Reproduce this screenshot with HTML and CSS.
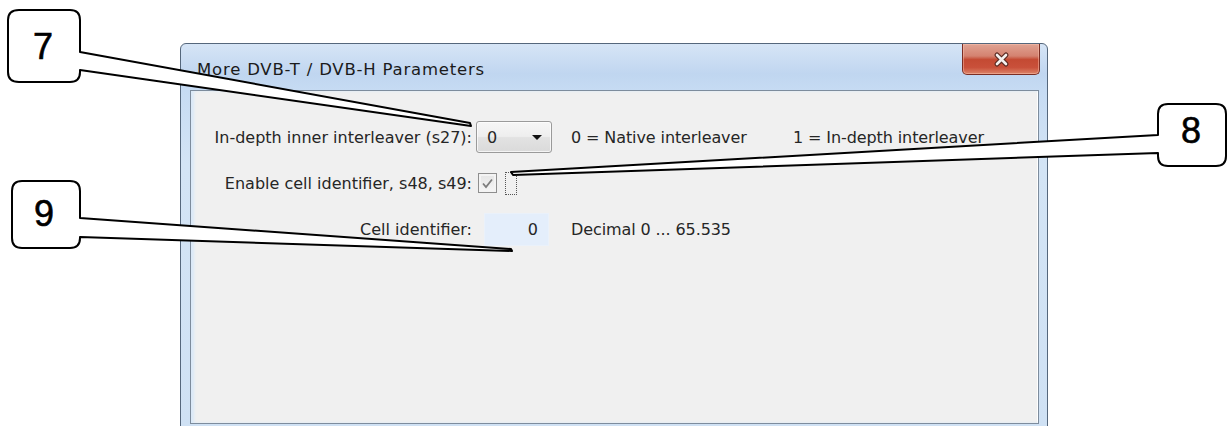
FILE: index.html
```html
<!DOCTYPE html>
<html lang="en">
<head>
<meta charset="utf-8">
<title>More DVB-T / DVB-H Parameters</title>
<link rel="stylesheet" href="styles.css">
</head>
<body>
<div class="stage">
  <div class="window">
    <div class="titlebar">
      <span class="title">More DVB-T / DVB-H Parameters</span>
      <div class="close" aria-label="Close">
        <svg width="17" height="17" viewBox="0 0 17 17">
          <path d="M4 4 L13 13 M13 4 L4 13" stroke="#5a2a22" stroke-width="5" stroke-linecap="round"/>
          <path d="M4 4 L13 13 M13 4 L4 13" stroke="#f4f0ee" stroke-width="2.6" stroke-linecap="round"/>
        </svg>
      </div>
    </div>
    <div class="client">
      <div class="form">
        <label class="lbl">In-depth inner interleaver (s27):</label>
        <div class="ctl">
          <div class="combo"><span>0</span><i class="arrow"></i></div>
        </div>
        <span class="desc">0 = Native interleaver</span>
        <span class="desc">1 = In-depth interleaver</span>

        <label class="lbl">Enable cell identifier, s48, s49:</label>
        <div class="ctl">
          <div class="check">
            <svg width="13" height="13" viewBox="0 0 13 13"><path d="M2 6.5 L5 10 L11 2.5" fill="none" stroke="#7d7d7d" stroke-width="1.8"/></svg>
          </div>
          <span class="focus"></span>
        </div>
        <span></span>
        <span></span>

        <label class="lbl">Cell identifier:</label>
        <div class="ctl">
          <div class="field">0</div>
        </div>
        <span class="desc">Decimal 0 ... 65.535</span>
        <span></span>
      </div>
    </div>
  </div>

  <svg class="callouts" width="1230" height="426" viewBox="0 0 1230 426">
    <g fill="#ffffff" stroke="#000000" stroke-width="2" stroke-linejoin="round">
      <path d="M19 10 H70 Q80 10 80 20 V52 L470 123 L471 126 L80 70 V72 Q80 82 70 82 H19 Q8 82 8 72 V20 Q8 10 19 10 Z"/>
      <path d="M1168 104 H1216 Q1226 104 1226 114 V156 Q1226 166 1216 166 H1168 Q1158 166 1158 156 V153 L513 175 L511 172 L1158 135 V114 Q1158 104 1168 104 Z"/>
      <path d="M22 181 H70 Q80 181 80 191 V218 L511 249 L512 251 L80 237 V238 Q80 248 70 248 H22 Q12 248 12 238 V191 Q12 181 22 181 Z"/>
    </g>
    <g class="num">
      <text x="43" y="59" text-anchor="middle">7</text>
      <text x="1191" y="143" text-anchor="middle">8</text>
      <text x="44" y="226" text-anchor="middle">9</text>
    </g>
  </svg>
</div>
</body>
</html>
```

FILE: styles.css
```css
html, body {
  margin: 0;
  padding: 0;
  background: #ffffff;
}

.stage {
  position: relative;
  width: 1230px;
  height: 426px;
  overflow: hidden;
  padding-top: 43px;
  box-sizing: border-box;
}

/* Aero-basic style dialog frame */
.window {
  margin-left: 180px;
  width: 868px;
  height: 390px;
  box-sizing: border-box;
  border: 1px solid #55677c;
  border-radius: 6px 6px 0 0;
  background: linear-gradient(#d6e5f6 0px, #c0d6f0 30px, #c6dbf3 46px, #d3e4f5 120px, #cfe1f4 100%);
  padding: 0 8px 8px 9px;
  display: flex;
  flex-direction: column;
  font-family: "DejaVu Sans", "Noto Sans", sans-serif;
  color: #262626;
}

.titlebar {
  height: 46px;
  display: flex;
  justify-content: space-between;
  align-items: flex-start;
  padding-left: 7px;
}

.title {
  font-size: 16.5px;
  line-height: 1;
  margin-top: 18px;
  color: #1b1b1b;
  letter-spacing: 0.8px;
}

.close {
  width: 78px;
  height: 31px;
  margin-right: -1px;
  box-sizing: border-box;
  border: 1px solid #7b2e24;
  border-top: none;
  border-radius: 0 0 5px 5px;
  background: linear-gradient(#e0a393 0%, #d48270 40%, #c44a33 52%, #c9503a 78%, #dc8468 100%);
  box-shadow: inset 0 0 0 1px rgba(255, 200, 180, 0.45);
  display: flex;
  align-items: center;
  justify-content: center;
  padding-top: 1px;
}

.client {
  flex: 1;
  background: #f0f0f0;
  border: 1px solid #7d8c9d;
  box-shadow: inset 3px 0 3px rgba(215, 232, 248, 0.9), inset -9px -3px 0 -8px #ffffff;
  padding: 30px 0 0 8px;
}

.form {
  display: grid;
  grid-template-columns: 273px 99px 222px auto;
  grid-template-rows: 32px 32px 33px;
  row-gap: 14px;
  align-items: center;
  font-size: 16px;
}

.lbl {
  text-align: right;
  white-space: nowrap;
}

.ctl {
  display: flex;
  align-items: center;
  height: 100%;
}

.desc {
  white-space: nowrap;
  letter-spacing: -0.1px;
}

.combo {
  margin-left: 4px;
  width: 76px;
  height: 32px;
  box-sizing: border-box;
  border: 1px solid #9a9a9a;
  border-radius: 3px;
  background: linear-gradient(#f6f6f6 0%, #eeeeee 48%, #e2e2e2 52%, #dadada 100%);
  box-shadow: inset 0 0 0 1px rgba(255, 255, 255, 0.7);
  display: flex;
  align-items: center;
  justify-content: space-between;
  padding: 0 9px 0 10px;
}

.arrow {
  width: 0;
  height: 0;
  border-left: 5px solid transparent;
  border-right: 5px solid transparent;
  border-top: 5px solid #111111;
}

.check {
  margin-left: 6px;
  width: 19px;
  height: 20px;
  box-sizing: border-box;
  border: 1px solid #8e8e8e;
  background: linear-gradient(#e4e4e4, #f6f6f6);
  box-shadow: inset 0 0 0 2px #f3f3f3;
  display: flex;
  align-items: center;
  justify-content: center;
}

.focus {
  margin-left: 8px;
  width: 12px;
  height: 23px;
  box-sizing: border-box;
  border: 1px dotted #555555;
}

.field {
  margin-left: 12px;
  width: 65px;
  height: 33px;
  box-sizing: border-box;
  background: #e4eefb;
  border: 1px solid #eaf1fa;
  text-align: right;
  padding-right: 10px;
  line-height: 31px;
}

.callouts {
  position: absolute;
  left: 0;
  top: 0;
}

.num text {
  font-family: "Liberation Sans", Arial, sans-serif;
  font-size: 36px;
  fill: #000000;
  stroke: #000000;
  stroke-width: 0.6px;
}
```
